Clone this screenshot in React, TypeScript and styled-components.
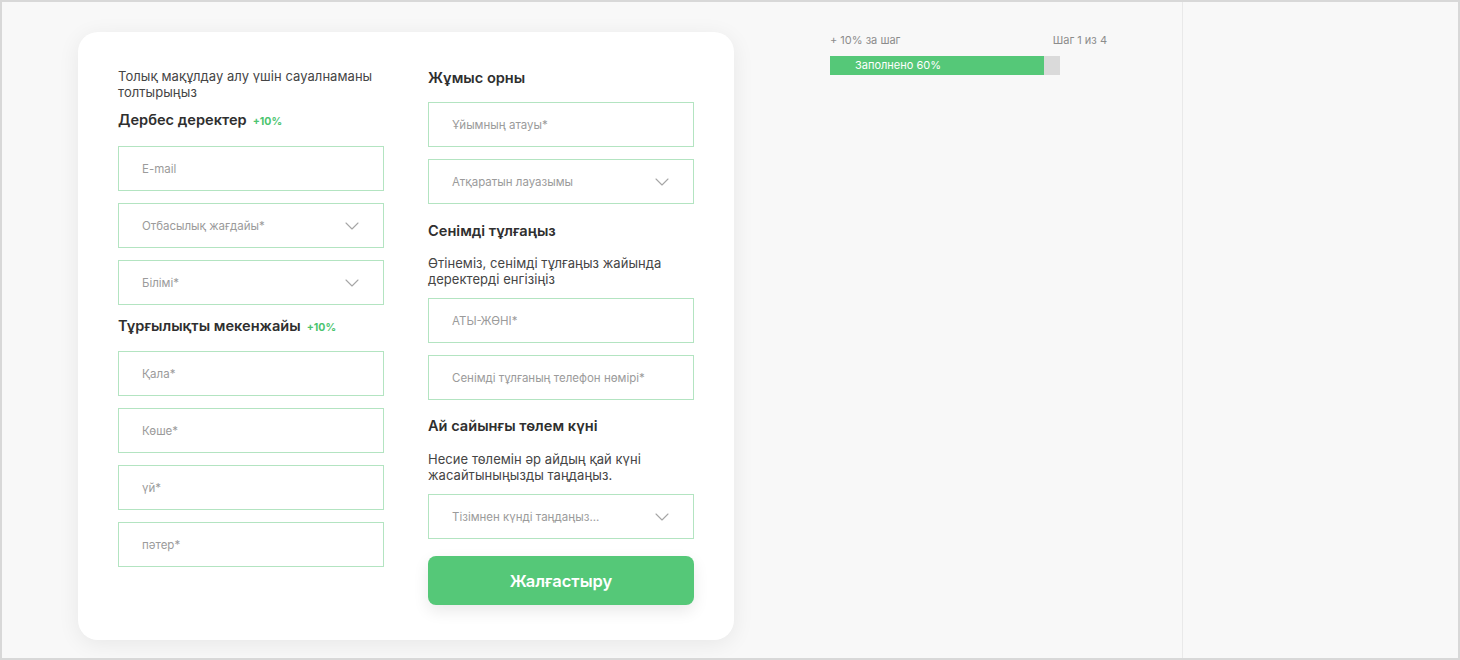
import React from "react";
import styled, { createGlobalStyle } from "styled-components";

const Global = createGlobalStyle`
  html, body { margin: 0; padding: 0; }
  body { font-family: Inter, "Noto Sans", "DejaVu Sans", sans-serif; background: #f8f8f8; }
  * { box-sizing: border-box; }
`;

const Frame = styled.div`
  width: 1460px;
  height: 660px;
  border: 2px solid #d8d8d8;
  background: #f8f8f8;
  display: flex;
  overflow: hidden;
`;

const Main = styled.div`
  width: 1181px;
  border-right: 1px solid #e9e9e9;
  display: flex;
  align-items: flex-start;
  padding-left: 76px;
`;

const Side = styled.div`
  flex: 1;
  background: #f8f8f8;
`;

const Card = styled.div`
  margin-top: 30px;
  width: 656px;
  height: 608px;
  background: #fff;
  border-radius: 20px;
  box-shadow: 0 4px 22px rgba(0, 0, 0, 0.07);
  padding: 36px 40px 0 40px;
  display: grid;
  grid-template-columns: 266px 266px;
  column-gap: 44px;
  align-items: start;
`;

const Column = styled.div`
  display: flex;
  flex-direction: column;
`;

const Text = styled.p<{ $mt?: number }>`
  margin: ${(p) => p.$mt ?? 0}px 0 0 0;
  font-size: 13px;
  line-height: 16px;
  color: #454545;
  letter-spacing: 0.05px;
`;

const Heading = styled.h3<{ $mt?: number }>`
  margin: ${(p) => p.$mt ?? 0}px 0 0 0;
  font-size: 14.6px;
  line-height: 20px;
  font-weight: 600;
  color: #2f2f2f;
  display: flex;
  align-items: baseline;
  gap: 6px;
`;

const Bonus = styled.span`
  font-size: 10.5px;
  font-weight: 700;
  color: #4cc46f;
`;

const FieldBox = styled.div<{ $mt?: number }>`
  margin-top: ${(p) => p.$mt ?? 12}px;
  height: 45px;
  border: 1.5px solid #b3e4c1;
  background: #fff;
  display: flex;
  align-items: center;
  padding: 0 24px 0 23px;
  font-size: 11.5px;
  color: #9b9b9b;
  justify-content: space-between;
`;

const Input = styled.input`
  border: none;
  outline: none;
  width: 100%;
  padding: 0;
  font: inherit;
  color: #333;
  background: transparent;
  &::placeholder { color: #9b9b9b; }
`;

const Chevron = () => (
  <svg width="14" height="8" viewBox="0 0 14 8" fill="none">
    <path d="M1 1l6 6 6-6" stroke="#a6a6a6" strokeWidth="1.1" strokeLinecap="round" strokeLinejoin="round" />
  </svg>
);

const Field = ({ placeholder, mt }: { placeholder: string; mt?: number }) => (
  <FieldBox $mt={mt}>
    <Input placeholder={placeholder} />
  </FieldBox>
);

const Select = ({ label, mt }: { label: string; mt?: number }) => (
  <FieldBox $mt={mt}>
    <span>{label}</span>
    <Chevron />
  </FieldBox>
);

const Button = styled.button`
  margin-top: 17px;
  height: 49px;
  border: none;
  border-radius: 8px;
  background: #55c878;
  color: #fff;
  font-family: inherit;
  font-size: 16.5px;
  font-weight: 600;
  box-shadow: 0 6px 16px rgba(0, 0, 0, 0.09);
  cursor: pointer;
`;

const Progress = styled.div`
  margin-left: 96px;
  margin-top: 31px;
  width: 277px;
  display: flex;
  flex-direction: column;
`;

const ProgressMeta = styled.div`
  display: flex;
  justify-content: space-between;
  font-size: 11px;
  line-height: 14px;
  color: #8c8c8c;
`;

const Bar = styled.div`
  margin-top: 9px;
  width: 230px;
  height: 19px;
  background: #dadada;
  display: flex;
`;

const Fill = styled.div`
  height: 100%;
  background: #55c878;
  color: #fff;
  font-size: 11px;
  line-height: 19px;
  padding-left: 25px;
  white-space: nowrap;
`;

export default function App() {
  return (
    <>
      <Global />
      <Frame>
        <Main>
          <Card>
            <Column>
              <Text $mt={0}>Толық мақұлдау алу үшін сауалнаманы толтырыңыз</Text>
              <Heading $mt={10}>
                Дербес деректер <Bonus>+10%</Bonus>
              </Heading>
              <Field placeholder="E-mail" mt={14} />
              <Select label="Отбасылық жағдайы*" />
              <Select label="Білімі*" />
              <Heading $mt={11}>
                Тұрғылықты мекенжайы <Bonus>+10%</Bonus>
              </Heading>
              <Field placeholder="Қала*" mt={13} />
              <Field placeholder="Көше*" />
              <Field placeholder="үй*" />
              <Field placeholder="пәтер*" />
            </Column>
            <Column>
              <Heading $mt={0}>Жұмыс орны</Heading>
              <Field placeholder="Ұйымның атауы*" mt={14} />
              <Select label="Атқаратын лауазымы" />
              <Heading $mt={17}>Сенімді тұлғаңыз</Heading>
              <Text $mt={14}>Өтінеміз, сенімді тұлғаңыз жайында деректерді енгізіңіз</Text>
              <Field placeholder="АТЫ-ЖӨНІ*" mt={11} />
              <Field placeholder="Сенімді тұлғаның телефон нөмірі*" />
              <Heading $mt={16}>Ай сайынғы төлем күні</Heading>
              <Text $mt={15}>Несие төлемін әр айдың қай күні жасайтыныңызды таңдаңыз.</Text>
              <Select label="Тізімнен күнді таңдаңыз..." mt={11} />
              <Button>Жалғастыру</Button>
            </Column>
          </Card>
          <Progress>
            <ProgressMeta>
              <span>+ 10% за шаг</span>
              <span>Шаг 1 из 4</span>
            </ProgressMeta>
            <Bar>
              <Fill style={{ width: "93%" }}>Заполнено 60%</Fill>
            </Bar>
          </Progress>
        </Main>
        <Side />
      </Frame>
    </>
  );
}
